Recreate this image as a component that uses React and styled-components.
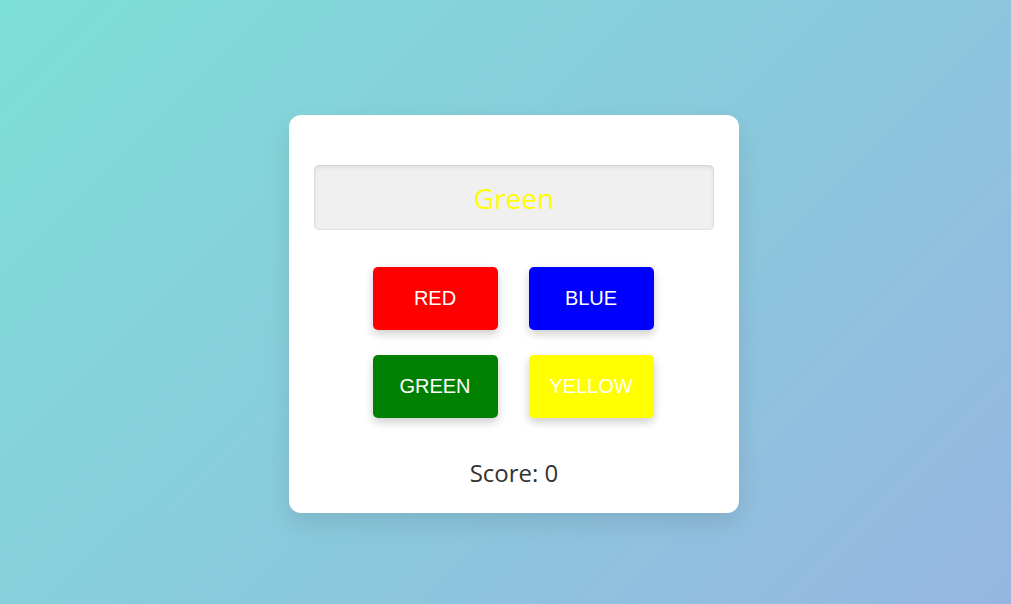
import React, { useState } from 'react'
import styled, { createGlobalStyle } from 'styled-components'

const GlobalStyle = createGlobalStyle`
  html, body {
    margin: 0;
    padding: 0;
    height: 100%;
  }
  body {
    font-family: "Open Sans", "Noto Sans", sans-serif;
    background: linear-gradient(135deg, #7ddfd7 0%, #96b6e1 100%);
    min-height: 100vh;
  }
`

const Page = styled.div`
  height: 604px;
  box-sizing: border-box;
  padding-left: 17px;
  display: flex;
  align-items: center;
  justify-content: center;
`

const Card = styled.div`
  width: 400px;
  padding: 50px 25px 24px;
  background: #fff;
  border-radius: 12px;
  box-shadow: 0 10px 25px rgba(0, 0, 0, 0.1);
  display: flex;
  flex-direction: column;
  align-items: center;
  margin-top: 24px;
`

const ColorDisplay = styled.div`
  width: 100%;
  height: 65px;
  box-sizing: border-box;
  background: #f0f0f0;
  border-radius: 5px;
  box-shadow: inset 0 2px 4px rgba(0, 0, 0, 0.1), inset 0 0 0 1px rgba(0, 0, 0, 0.04);
  display: flex;
  align-items: center;
  justify-content: center;
  font-size: 28px;
  color: ${p => p.$textColor};
`

const Choices = styled.div`
  margin-top: 37px;
  margin-right: 2px;
  display: grid;
  grid-template-columns: 125px 125px;
  column-gap: 31px;
  row-gap: 25px;
`

const ChoiceButton = styled.button`
  height: 63px;
  border: none;
  border-radius: 5px;
  background: ${p => p.$bg};
  color: #fff;
  font-family: "Liberation Sans", Arial, sans-serif;
  font-size: 20px;
  cursor: pointer;
  box-shadow: 0 4px 10px rgba(0, 0, 0, 0.2);
`

const Score = styled.div`
  margin-top: 38px;
  font-size: 24px;
  color: #333;
`

const colors = [
  { name: 'RED', bg: 'red' },
  { name: 'BLUE', bg: 'blue' },
  { name: 'GREEN', bg: 'green' },
  { name: 'YELLOW', bg: 'yellow' },
]

export default function App() {
  const [score] = useState(0)
  return (
    <>
      <GlobalStyle />
      <Page>
        <Card>
          <ColorDisplay $textColor="yellow">Green</ColorDisplay>
          <Choices>
            {colors.map(c => (
              <ChoiceButton key={c.name} $bg={c.bg}>{c.name}</ChoiceButton>
            ))}
          </Choices>
          <Score>Score: {score}</Score>
        </Card>
      </Page>
    </>
  )
}
